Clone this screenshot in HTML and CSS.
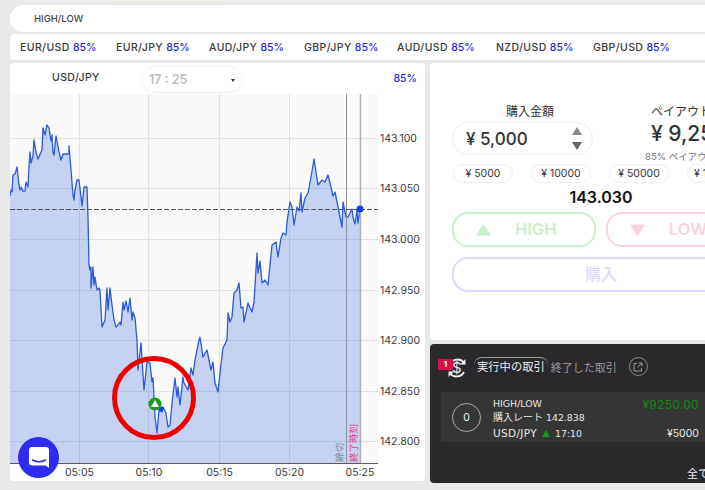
FILE: index.html
```html
<!DOCTYPE html>
<html lang="ja">
<head>
<meta charset="utf-8">
<title>HIGH/LOW</title>
<link rel="stylesheet" href="styles.css">
</head>
<body>
<div class="page">
  <div class="top-strip"></div>
  <header class="mode-bar">HIGH/LOW</header>
  <nav class="pairs">
    <span class="pair p1">EUR/USD <b>85%</b></span>
    <span class="pair p2">EUR/JPY <b>85%</b></span>
    <span class="pair p3">AUD/JPY <b>85%</b></span>
    <span class="pair p4">GBP/JPY <b>85%</b></span>
    <span class="pair p5">AUD/USD <b>85%</b></span>
    <span class="pair p6">NZD/USD <b>85%</b></span>
    <span class="pair">GBP/USD <b>85%</b></span>
  </nav>
  <main class="columns">
    <section class="chart-card">
      <div class="chart-head">
        <span class="symbol">USD/JPY</span>
        <span class="time-select">17 : 25<i class="caret"></i></span>
        <span class="rate">85%</span>
      </div>
      <svg class="chart" width="415" height="388" viewBox="10 94 415 388">
        <rect class="plot" x="10" y="94" width="368" height="370"/>
        <g class="grid">
          <path d="M10 138.5H378M10 188.5H378M10 239.5H378M10 290.5H378M10 340.5H378M10 391.5H378M10 441.5H378"/>
          <path d="M79.5 94V464M148.5 94V464M219.5 94V464M289.5 94V464"/>
        </g>
        <path class="area" d="M10 196L11 190L12 192L13 175L15 174L17 167L19 185L20 190L21 187L23 191L25 191L26 182L28 187L29 167L30 152L31 163L33 156L34 140L36 152L38 159L42 150L43 128L45 135L47 125L49 128L51 141L52 135L53 152L54 155L56 136L59 152L61 160L63 154L69 154L69 146L71 170L73 195L74 200L75 190L77 180L79 180L81 197L82 206L84 187L87 187L88 217L89 265L90 270L91 267L91 288L93 267L94 285L95 277L97 290L99 288L100 290L102 327L105 320L107 288L108 310L110 288L112 305L114 320L116 327L118 325L120 322L121 325L123 302L124 310L126 301L128 312L130 298L132 320L133 312L135 318L137 340L138 370L141 343L144 390L147 362L150 363L152 382L153 378L155 417L157 433L159 410L162 412L163 407L166 413L168 427L170 425L172 403L175 378L177 397L178 387L180 405L183 377L184 383L188 390L191 368L193 375L195 360L197 350L199 340L200 337L203 357L207 350L211 370L213 362L215 383L218 392L220 373L223 348L227 340L228 313L230 322L232 317L234 293L237 290L239 283L241 308L243 307L244 322L248 303L252 312L254 302L257 253L258 273L260 261L262 283L265 280L268 285L272 245L276 242L278 257L281 238L283 233L286 235L287 222L290 202L292 207L294 225L297 207L299 211L301 193L302 212L305 198L308 193L311 177L314 159L318 185L322 180L325 182L328 175L331 187L333 196L335 192L338 207L342 227L343 202L346 217L348 217L352 209L353 217L355 224L357 210L358 223L360 209V464H10Z"/>
        <path class="line" d="M10 196L11 190L12 192L13 175L15 174L17 167L19 185L20 190L21 187L23 191L25 191L26 182L28 187L29 167L30 152L31 163L33 156L34 140L36 152L38 159L42 150L43 128L45 135L47 125L49 128L51 141L52 135L53 152L54 155L56 136L59 152L61 160L63 154L69 154L69 146L71 170L73 195L74 200L75 190L77 180L79 180L81 197L82 206L84 187L87 187L88 217L89 265L90 270L91 267L91 288L93 267L94 285L95 277L97 290L99 288L100 290L102 327L105 320L107 288L108 310L110 288L112 305L114 320L116 327L118 325L120 322L121 325L123 302L124 310L126 301L128 312L130 298L132 320L133 312L135 318L137 340L138 370L141 343L144 390L147 362L150 363L152 382L153 378L155 417L157 433L159 410L162 412L163 407L166 413L168 427L170 425L172 403L175 378L177 397L178 387L180 405L183 377L184 383L188 390L191 368L193 375L195 360L197 350L199 340L200 337L203 357L207 350L211 370L213 362L215 383L218 392L220 373L223 348L227 340L228 313L230 322L232 317L234 293L237 290L239 283L241 308L243 307L244 322L248 303L252 312L254 302L257 253L258 273L260 261L262 283L265 280L268 285L272 245L276 242L278 257L281 238L283 233L286 235L287 222L290 202L292 207L294 225L297 207L299 211L301 193L302 212L305 198L308 193L311 177L314 159L318 185L322 180L325 182L328 175L331 187L333 196L335 192L338 207L342 227L343 202L346 217L348 217L352 209L353 217L355 224L357 210L358 223L360 209"/>
        <path class="limit close" d="M346.5 94V464"/>
        <path class="limit end" d="M360.5 94V464"/>
        <path class="dash" d="M10 209.5H378"/>
        <path class="axis" d="M10 463.5H378"/>
        <circle class="dot" cx="360" cy="209" r="3.5"/>
        <circle class="dot" cx="161" cy="409" r="2.5"/>
        <g class="y-labels">
          <text x="380" y="142">143.100</text>
          <text x="380" y="192">143.050</text>
          <text x="380" y="243">143.000</text>
          <text x="380" y="294">142.950</text>
          <text x="380" y="344">142.900</text>
          <text x="380" y="395">142.850</text>
          <text x="380" y="445">142.800</text>
        </g>
        <g class="x-labels">
          <text x="79.5" y="476">05:05</text>
          <text x="149" y="476">05:10</text>
          <text x="219.5" y="476">05:15</text>
          <text x="289.5" y="476">05:20</text>
          <text x="360" y="476">05:25</text>
        </g>
        <text class="v-label gray" transform="translate(343 462) rotate(-90)">締切</text>
        <text class="v-label pink" transform="translate(357 462) rotate(-90)">終了時刻</text>
        <circle class="marker" cx="155" cy="404" r="6.500"/>
        <path class="marker-tri" d="M155 400L159 407H151Z"/>
        <circle class="ring" cx="154" cy="398" r="39.500"/>
      </svg>
    </section>
    <aside class="side">
      <section class="order">
        <div class="amounts">
          <div class="amount">
            <div class="label">購入金額</div>
            <div class="amount-box">
              <span>¥ 5,000</span>
              <span class="steppers"><i class="up"></i><i class="down"></i></span>
            </div>
          </div>
          <div class="payout">
            <div class="label">ペイアウト</div>
            <div class="payout-value">¥ 9,250</div>
            <div class="payout-note">85% ペイアウト</div>
          </div>
        </div>
        <div class="chips">
          <span class="chip">¥ 5000</span>
          <span class="chip">¥ 10000</span>
          <span class="chip">¥ 50000</span>
          <span class="chip">¥ 100000</span>
        </div>
        <div class="price">143.030</div>
        <div class="dir-row">
          <div class="dir high">
            <svg class="tri" width="15" height="12" viewBox="0 0 15 12"><path d="M7.500 1.500L13.500 10.500H1.500Z"/></svg>
            <span>HIGH</span>
          </div>
          <div class="dir low">
            <svg class="tri" width="15" height="12" viewBox="0 0 15 12"><path d="M1.500 1.500H13.500L7.500 10.500Z"/></svg>
            <span>LOW</span>
          </div>
        </div>
        <div class="buy">購入</div>
      </section>
      <section class="trades">
        <div class="tabs">
          <span class="badge">1</span>
          <svg class="swap" width="22" height="22" viewBox="0 0 22 22">
            <path d="M4 7A8.500 8.500 0 0 1 18 5.500M18 15A8.500 8.500 0 0 1 4 16.500"/>
            <path class="head" d="M19.500 2V7.500H14ZM2.500 20V14.500H8Z"/>
          </svg>
          <span class="dollar">$</span>
          <span class="tab active">実行中の取引</span>
          <span class="tab">終了した取引</span>
          <span class="open">
            <svg width="10" height="10" viewBox="0 0 10 10"><path d="M4 1.500H1V9H8.500V6M5.500 1H9V4.500M9 1L4.500 5.500"/></svg>
          </span>
        </div>
        <div class="trade-row">
          <span class="count">0</span>
          <div class="trade-info">
            <div>HIGH/LOW</div>
            <div><span class="jp">購入レート</span> 142.838</div>
            <div><span class="sym">USD/JPY</span> <i class="mini-up"></i> 17:10</div>
          </div>
          <div class="trade-money">
            <div class="win">¥9250.00</div>
            <div>¥5000</div>
          </div>
        </div>
        <div class="all">全ての取引</div>
      </section>
    </aside>
  </main>
  <button class="chat" aria-label="chat">
    <svg width="20" height="22" viewBox="0 0 20 22">
      <path class="bubble" d="M3 0H17A3 3 0 0 1 20 3V21L16.500 18.500H3A3 3 0 0 1 0 15.500V3A3 3 0 0 1 3 0Z"/>
      <path class="smile" d="M3.500 13Q10 16.500 16.500 13"/>
    </svg>
  </button>
</div>
</body>
</html>
```
FILE: styles.css
```css
* { box-sizing: border-box; }
html, body { margin: 0; padding: 0; }
body { background: #e9e9e9; font-family: Inter, "Noto Sans CJK JP", sans-serif; color: #333; }
.page { position: relative; width: 705px; height: 490px; overflow: hidden; padding: 5px 0 0 10px; }
.top-strip { position: absolute; left: 107px; top: 0; width: 117px; height: 1px; background: #f5f5e4; }

.mode-bar { height: 27px; width: 720px; background: #fff; border-radius: 14px; padding-left: 24px; font-size: 9.500px; line-height: 27px; font-weight: 500; color: #444; }

.pairs { display: flex; align-items: center; height: 26px; margin-top: 2px; width: 720px; background: #fff; border-radius: 4px; padding-left: 10px; font-size: 10.500px; font-weight: 500; letter-spacing: .4px; color: #3a3a3a; white-space: nowrap; }
.pair b { font-weight: 500; letter-spacing: 0; color: #2a1ee0; }
.pair { width: 96px; flex: none; }
.p2 { width: 93px; }
.p3 { width: 95px; }
.p4 { width: 93px; }
.p5 { width: 99px; }
.p6 { width: 97px; }

.columns { display: flex; gap: 5px; margin-top: 3px; width: 800px; }

.chart-card { width: 415px; height: 418px; background: #fff; border-radius: 4px; overflow: hidden; flex: none; }
.chart-head { position: relative; display: flex; align-items: center; height: 31px; font-size: 10.500px; font-weight: 500; color: #3a3a3a; padding-left: 42px; }
.symbol { width: 89px; letter-spacing: .4px; margin-top: -2px; }
.time-select { position: relative; width: 102px; height: 27px; margin-top: 1px; border: 1px solid #eee; border-radius: 14px; padding-left: 7px; line-height: 26px; font-size: 12.500px; font-weight: 600; color: #bdbdbd; }
.caret { position: absolute; right: 7px; top: 12px; border-style: solid; border-width: 3.500px 2.500px 0; border-color: #333 transparent transparent; }
.rate { margin-left: auto; margin-right: 8px; color: #2a1ee0; }

.chart { display: block; }
.plot { fill: #fafafa; }
.grid path { stroke: #e2e2e2; fill: none; stroke-width: 1; }
.area { fill: #2a5bdc; fill-opacity: .25; }
.line { fill: none; stroke: #2a5bdc; stroke-width: 1.300; stroke-linejoin: round; }
.limit { fill: none; }
.close { stroke: #8e949e; stroke-width: 1; }
.end { stroke: #adb0b6; stroke-width: 1.500; }
.dash { stroke: #555; stroke-width: 1.200; stroke-dasharray: 5 2; fill: none; }
.axis { stroke: #5a5a5a; stroke-width: 1; fill: none; }
.dot { fill: #1246d6; }
.y-labels text, .x-labels text { font-size: 10.500px; fill: #3a3a3a; font-family: Inter, sans-serif; }
.x-labels text { text-anchor: middle; }
.v-label { font-size: 9.500px; font-family: "Noto Sans CJK JP", sans-serif; }
.gray { fill: #8a8f98; }
.pink { fill: #ec3d78; }
.marker { fill: #159a1d; }
.marker-tri { fill: #fff; }
.ring { fill: none; stroke: #ee0000; stroke-width: 5; }

.side { width: 360px; flex: none; }
.order { height: 277px; background: #fff; border-radius: 4px 0 0 4px; padding: 40px 0 0 22px; }
.amounts { display: flex; }
.amount { width: 141px; margin-right: 58px; }
.amount .label { padding-left: 15px; }
.label { text-align: center; font-size: 12px; line-height: 18px; color: #333; }
.amount-box { display: flex; align-items: center; justify-content: space-between; height: 33px; margin-top: 1px; border: 1.500px solid #eee; border-radius: 16px; padding: 0 10px 0 13px; font-size: 17px; font-weight: 500; color: #333; }
.steppers { display: flex; flex-direction: column; gap: 7px; }
.up, .down { display: block; border-style: solid; border-color: transparent; }
.up { border-width: 0 5px 8px; border-bottom-color: #888; }
.down { border-width: 8px 5px 0; border-top-color: #666; }
.payout { width: 110px; }
.payout .label { text-align: left; }
.payout-value { font-size: 21px; font-weight: 500; line-height: 28px; margin-top: -1px; white-space: nowrap; }
.payout-note { font-size: 9.500px; line-height: 14px; color: #777; margin-top: 2px; margin-left: -6px; white-space: nowrap; }

.chips { display: flex; gap: 18px; margin: 0 0 0 1px; }
.chip { width: 60px; height: 19px; flex: none; border: 1px solid #eee; border-radius: 10px; text-align: center; font-size: 10.500px; line-height: 17px; color: #333; white-space: nowrap; }
.price { width: 298px; text-align: center; font-size: 16px; font-weight: 600; line-height: 20px; margin-top: 4px; color: #111; }
.dir-row { display: flex; gap: 10px; margin-top: 5px; width: 298px; }
.dir { display: flex; align-items: center; width: 144px; height: 35px; flex: none; border: 2px solid; border-radius: 16px; font-size: 16.500px; font-weight: 600; padding-left: 22px; }
.dir span { margin-left: 24px; margin-top: -1px; }
.high { border-color: #c9efc9; color: #c9efc9; }
.low { border-color: #fbd2de; color: #fbd2de; }
.tri path { fill: currentColor; stroke: currentColor; stroke-width: 2; stroke-linejoin: round; }
.buy { width: 298px; height: 35px; margin-top: 10px; border: 2px solid #dadafa; border-radius: 16px; text-align: center; font-size: 16px; line-height: 30px; font-weight: 500; color: #dadafa; }

.trades { position: relative; height: 139px; margin-top: 4px; background: #2b282c; border-radius: 4px 0 0 4px; color: #eee; padding: 12px 0 0 11px; }
.tabs { position: relative; display: flex; align-items: center; height: 21px; padding-left: 33px; font-size: 11px; }
.badge { position: absolute; left: -3px; top: 3px; width: 15px; height: 11px; background: #d4114a; border-radius: 1px; color: #fff; font-size: 8px; font-weight: 700; line-height: 11px; text-align: center; z-index: 1; }
.swap { position: absolute; left: 5px; top: 1px; }
.swap path { fill: none; stroke: #eee; stroke-width: 1.800; }
.swap .head { fill: #eee; stroke: none; }
.dollar { position: absolute; left: 11px; top: 3px; font-size: 15px; font-weight: 400; line-height: 18px; color: #eee; }
.tab { color: #9a9a9a; padding: 0 3px; white-space: nowrap; }
.tab.active { color: #eee; border-top: 1px solid #999; border-radius: 8px 8px 0 0; line-height: 19px; padding: 0 3px; font-size: 11.300px; }
.open { display: flex; align-items: center; justify-content: center; width: 19px; height: 19px; margin-left: 9px; border: 1px solid #888; border-radius: 50%; }
.open path { fill: none; stroke: #999; stroke-width: 1; }

.trade-row { display: flex; align-items: center; width: 264px; height: 50px; margin-top: 15px; background: #363636; padding-left: 11px; }
.count { width: 29px; height: 29px; flex: none; border: 1px solid #aaa; border-radius: 50%; text-align: center; line-height: 27px; font-size: 10.500px; font-weight: 400; color: #eee; }
.trade-info { margin-left: 12px; padding-top: 4px; font-family: "DejaVu Sans", "Noto Sans CJK JP", sans-serif; font-size: 9.400px; line-height: 14.300px; color: #e6e6e6; white-space: nowrap; }
.jp { font-size: 10px; }
.sym { font-size: 10.500px; letter-spacing: .35px; }
.mini-up { display: inline-block; border-style: solid; border-width: 0 4.500px 7px; border-color: transparent transparent #159a1d; margin: 0 2px; }
.trade-money { margin-left: auto; margin-right: 6px; padding-top: 4px; text-align: right; font-size: 10.500px; color: #e6e6e6; line-height: 29px; }
.win { color: #128a14; font-size: 12px; letter-spacing: .3px; }
.all { position: absolute; left: 257px; top: 123px; font-size: 11px; line-height: 14px; color: #eee; white-space: nowrap; }

.chat { position: absolute; left: 18px; top: 437px; display: flex; align-items: center; justify-content: center; width: 41px; height: 41px; padding: 0; border: 0; border-radius: 50%; background: #2f2bf0; }
.bubble { fill: #fff; }
.smile { fill: none; stroke: #2f2bf0; stroke-width: 1.500; stroke-linecap: round; }
```
